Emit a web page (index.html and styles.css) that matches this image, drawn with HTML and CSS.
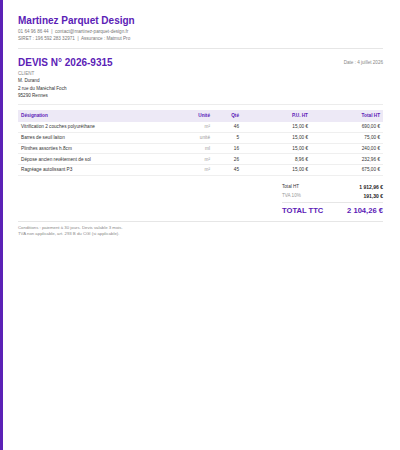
FILE: index.html
```html
<!DOCTYPE html>
<html lang="fr">
<head>
    <meta charset="UTF-8">
    <meta name="viewport" content="width=device-width, initial-scale=1.0">
    <title>Devis 2026-9315</title>
    <link rel="stylesheet" href="styles.css">
</head>
<body>
    <div class="page">
        <header class="company">
            <h1>Martinez Parquet Design</h1>
            <div class="company-info">01 64 96 86 44 &nbsp;|&nbsp; contact@martinez-parquet-design.fr</div>
            <div class="company-info">SIRET : 196 592 283 32971 &nbsp;|&nbsp; Assurance : Matmut Pro</div>
        </header>

        <div class="quote-head">
            <h2>DEVIS N° 2026-9315</h2>
            <div class="quote-date">Date : 4 juillet 2026</div>
        </div>

        <div class="client">
            <div class="client-label">CLIENT</div>
            <div>M. Durand</div>
            <div>2 rue du Maréchal Foch</div>
            <div>95290 Rennes</div>
        </div>

        <table class="lines">
            <tr>
                <th class="col-desc">Désignation</th>
                <th class="col-unit">Unité</th>
                <th class="col-qty">Qté</th>
                <th class="col-price">P.U. HT</th>
                <th class="col-total">Total HT</th>
            </tr>
            <tr>
                <td class="col-desc">Vitrification 2 couches polyuréthane</td>
                <td class="col-unit">m²</td>
                <td class="col-qty">46</td>
                <td class="col-price">15,00 €</td>
                <td class="col-total">690,00 €</td>
            </tr>
            <tr>
                <td class="col-desc">Barres de seuil laiton</td>
                <td class="col-unit">unité</td>
                <td class="col-qty">5</td>
                <td class="col-price">15,00 €</td>
                <td class="col-total">75,00 €</td>
            </tr>
            <tr>
                <td class="col-desc">Plinthes assorties h.8cm</td>
                <td class="col-unit">ml</td>
                <td class="col-qty">16</td>
                <td class="col-price">15,00 €</td>
                <td class="col-total">240,00 €</td>
            </tr>
            <tr>
                <td class="col-desc">Dépose ancien revêtement de sol</td>
                <td class="col-unit">m²</td>
                <td class="col-qty">26</td>
                <td class="col-price">8,96 €</td>
                <td class="col-total">232,96 €</td>
            </tr>
            <tr>
                <td class="col-desc">Ragréage autolissant P3</td>
                <td class="col-unit">m²</td>
                <td class="col-qty">45</td>
                <td class="col-price">15,00 €</td>
                <td class="col-total">675,00 €</td>
            </tr>
        </table>

        <div class="totals">
            <div class="total-row">
                <span>Total HT</span>
                <strong>1 912,96 €</strong>
            </div>
            <div class="total-row muted">
                <span>TVA 10%</span>
                <strong>191,30 €</strong>
            </div>
            <div class="total-row grand">
                <span>TOTAL TTC</span>
                <strong>2 104,26 €</strong>
            </div>
        </div>

        <footer class="conditions">
            <div>Conditions : paiement à 30 jours. Devis valable 3 mois.</div>
            <div>TVA non applicable, art. 293 B du CGI (si applicable).</div>
        </footer>
    </div>
</body>
</html>
```

FILE: styles.css
```css
* { margin: 0; padding: 0; box-sizing: border-box; }
body { background: #fff; font-family: 'Liberation Sans', Arial, sans-serif; color: #222; }
.page { min-height: 450px; border-left: 3px solid #5b21b6; padding: 14px 17px 0 15px; }

.company { padding-bottom: 6px; border-bottom: 1px solid #e6e6e6; }
.company h1 { font-size: 10px; line-height: 13px; color: #5b21b6; font-weight: bold; margin-bottom: 1px; }
.company-info { font-size: 4.6px; line-height: 7px; color: #777; }

.quote-head { display: flex; justify-content: space-between; align-items: center; margin-top: 7px; height: 13px; }
.quote-head h2 { font-size: 10px; line-height: 13px; color: #5b21b6; font-weight: bold; }
.quote-date { font-size: 4.6px; color: #888; }

.client { margin-top: 1px; padding-bottom: 4.5px; border-bottom: 1px solid #ececec; font-size: 4.6px; line-height: 7.3px; color: #333; }
.client-label { color: #888; }

.lines { width: 100%; border-collapse: collapse; margin-top: 5px; font-size: 4.7px; }
.lines th { background: #ede9f6; color: #5b21b6; font-weight: bold; height: 12px; padding: 0 3px; }
.lines td { height: 10.7px; padding: 0 3px; border-bottom: 1px solid #efefef; color: #333; }
.col-desc { text-align: left; }
.col-unit { text-align: right; width: 40px; }
.lines td.col-unit { color: #999; }
.col-qty { text-align: right; width: 29px; }
.col-price { text-align: right; width: 69px; }
.col-total { text-align: right; width: 72px; }

.totals { width: 101px; margin: 6.5px 0 0 auto; }
.total-row { display: flex; justify-content: space-between; align-items: center; font-size: 4.6px; height: 9px; color: #333; }
.total-row strong { font-size: 5px; color: #222; }
.total-row.muted span { color: #999; }
.total-row.grand { border-top: 1px solid #e6e6e6; margin-top: 1.5px; height: 16px; color: #5b21b6; font-weight: bold; }
.total-row.grand span, .total-row.grand strong { font-size: 7.6px; color: #5b21b6; }

.conditions { border-top: 1px solid #e6e6e6; margin-top: 3px; padding-top: 3px; font-size: 4.3px; line-height: 6px; color: #888; }
```
